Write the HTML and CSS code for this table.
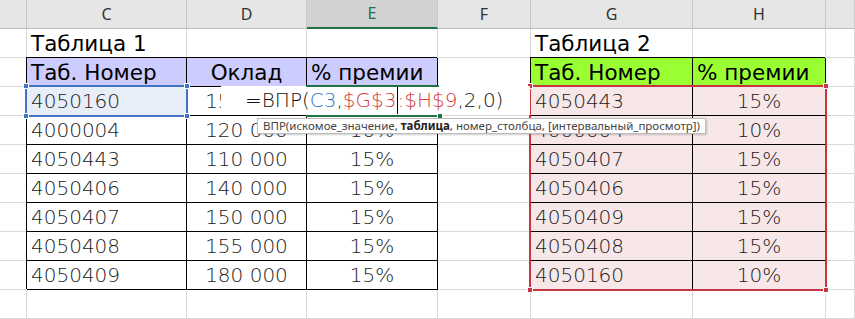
FILE: index.html
```html
<!DOCTYPE html>
<html lang="ru">
<head>
  <meta charset="UTF-8" />
  <title>ВПР — Таблица 1 и Таблица 2</title>
  <link rel="stylesheet" href="styles.css">
</head>
<body>
  <div class="sheet">
    <!-- column letters -->
    <div class="hd"></div>
    <div class="hd">C</div>
    <div class="hd">D</div>
    <div class="hd on">E</div>
    <div class="hd">F</div>
    <div class="hd">G</div>
    <div class="hd">H</div>
    <div class="hd"></div>

    <!-- row 1 -->
    <div class="c"></div>
    <div class="c cap">Таблица 1</div>
    <div class="c"></div>
    <div class="c"></div>
    <div class="c"></div>
    <div class="c cap">Таблица 2</div>
    <div class="c"></div>
    <div class="c"></div>

    <!-- row 2: table heads -->
    <div class="c"></div>
    <div class="c t h1 cap">Таб. Номер</div>
    <div class="c t h1 cap mid">Оклад</div>
    <div class="c t h1 cap">% премии</div>
    <div class="c"></div>
    <div class="c t h2 cap">Таб. Номер</div>
    <div class="c t h2 cap">% премии</div>
    <div class="c"></div>

    <!-- row 3 -->
    <div class="c"></div>
    <div class="c t n cur">4050160</div>
    <div class="c t n mid">150 000</div>
    <div class="c t n mid"></div>
    <div class="c"></div>
    <div class="c t n pk">4050443</div>
    <div class="c t n pk mid">15%</div>
    <div class="c"></div>

    <!-- row 4 -->
    <div class="c"></div>
    <div class="c t n">4000004</div>
    <div class="c t n mid">120 000</div>
    <div class="c t n mid">10%</div>
    <div class="c"></div>
    <div class="c t n pk">4000004</div>
    <div class="c t n pk mid">10%</div>
    <div class="c"></div>

    <!-- row 5 -->
    <div class="c"></div>
    <div class="c t n">4050443</div>
    <div class="c t n mid">110 000</div>
    <div class="c t n mid">15%</div>
    <div class="c"></div>
    <div class="c t n pk">4050407</div>
    <div class="c t n pk mid">15%</div>
    <div class="c"></div>

    <!-- row 6 -->
    <div class="c"></div>
    <div class="c t n">4050406</div>
    <div class="c t n mid">140 000</div>
    <div class="c t n mid">15%</div>
    <div class="c"></div>
    <div class="c t n pk">4050406</div>
    <div class="c t n pk mid">15%</div>
    <div class="c"></div>

    <!-- row 7 -->
    <div class="c"></div>
    <div class="c t n">4050407</div>
    <div class="c t n mid">150 000</div>
    <div class="c t n mid">15%</div>
    <div class="c"></div>
    <div class="c t n pk">4050409</div>
    <div class="c t n pk mid">15%</div>
    <div class="c"></div>

    <!-- row 8 -->
    <div class="c"></div>
    <div class="c t n">4050408</div>
    <div class="c t n mid">155 000</div>
    <div class="c t n mid">15%</div>
    <div class="c"></div>
    <div class="c t n pk">4050408</div>
    <div class="c t n pk mid">15%</div>
    <div class="c"></div>

    <!-- row 9 -->
    <div class="c"></div>
    <div class="c t n">4050409</div>
    <div class="c t n mid">180 000</div>
    <div class="c t n mid">15%</div>
    <div class="c"></div>
    <div class="c t n pk">4050160</div>
    <div class="c t n pk mid">10%</div>
    <div class="c"></div>

    <!-- row 10 -->
    <div class="c"></div>
    <div class="c"></div>
    <div class="c"></div>
    <div class="c"></div>
    <div class="c"></div>
    <div class="c"></div>
    <div class="c"></div>
    <div class="c"></div>

    <!-- selections, in-cell editor and hint -->
    <div class="sel sel-blue">
      <i class="hdl tl"></i><i class="hdl tr"></i><i class="hdl bl"></i><i class="hdl br"></i>
    </div>
    <div class="sel sel-red">
      <i class="hdl tl"></i><i class="hdl tr"></i><i class="hdl bl"></i><i class="hdl br"></i>
    </div>
    <div class="edit">=ВПР(<span class="ref-a">C3</span>,<span class="ref-b">$G$3<b class="caret"></b>:$H$9</span>,2,0)</div>
    <div class="sel-green"><i class="hdl br"></i></div>
    <div class="hint">ВПР(искомое_значение, <b>таблица</b>, номер_столбца, [интервальный_просмотр])</div>
  </div>
</body>
</html>
```

FILE: styles.css
```css
body {
  margin: 0;
  background: #fff;
  font-family: "Noto Sans", sans-serif;
}

.sheet {
  position: relative;
  display: grid;
  grid-template-columns: 27px 160px 120px 131px 93px 162px 133px 29px;
  grid-template-rows: repeat(11, 29px);
  width: 855px;
  height: 319px;
  overflow: hidden;
}

/* column letters */
.hd {
  background: #e6e6e6;
  border-right: 1px solid #c9c9c9;
  border-bottom: 1px solid #bdbdbd;
  color: #333;
  font-size: 16px;
  line-height: 28px;
  text-align: center;
}
.hd.on {
  background: #d2d2d2;
  color: #217346;
  border-bottom: 2px solid #217346;
  line-height: 27px;
}

/* plain cells */
.c {
  border-right: 1px solid #d9d9d9;
  border-bottom: 1px solid #d9d9d9;
  padding: 0 4px;
  font-size: 20px;
  line-height: 29px;
  white-space: nowrap;
  overflow: hidden;
  color: #000;
}
.cap {
  font-family: "DejaVu Sans", sans-serif;
  font-size: 21.5px;
}
.n {
  font-family: "DejaVu Sans", sans-serif;
  font-weight: 200;
  color: #1a1a1a;
}
.mid {
  text-align: center;
}

/* bordered table cells */
.t {
  border-right-color: #000;
  border-bottom-color: #000;
  box-shadow: -1px -1px 0 #000;
}
.h1 {
  background: #ccccff;
}
.h2 {
  background: #99ff33;
}
.pk {
  background: #f7e7e8;
}
.cur {
  background: #e8eef8;
}

/* selection frames */
.sel {
  position: absolute;
  inset: -2px -1px -1px -2px;
  border: 2px solid;
  pointer-events: none;
}
.sel-blue {
  grid-column: 2 / 3;
  grid-row: 4 / 5;
  border-color: #4472c4;
  color: #4472c4;
}
.sel-red {
  grid-column: 6 / 8;
  grid-row: 4 / 11;
  border-color: #c4373f;
  color: #c4373f;
}
.hdl {
  position: absolute;
  width: 6px;
  height: 6px;
  background: currentColor;
  border: 1px solid #fff;
  box-sizing: border-box;
}
.hdl.tl { left: -4px; top: -4px; }
.hdl.tr { right: -4px; top: -4px; }
.hdl.bl { left: -4px; bottom: -4px; }
.hdl.br { right: -4px; bottom: -4px; }

/* active cell E3 */
.sel-green {
  position: absolute;
  grid-column: 4 / 5;
  grid-row: 4 / 5;
  inset: -2px -1px -1px -1px;
  border-top: 2px solid #217346;
  border-bottom: 2px solid #217346;
  color: #217346;
}

/* in-cell formula editor */
.edit {
  position: absolute;
  grid-column: 3 / 6;
  grid-row: 4 / 5;
  inset: -1px 1px 1px 34px;
  background: #fff;
  padding-left: 24px;
  font-family: "DejaVu Sans", sans-serif;
  font-weight: 200;
  font-size: 20px;
  line-height: 29px;
  color: #111;
  white-space: nowrap;
}
.ref-a {
  color: #3a73c9;
}
.ref-b {
  color: #d0403c;
}
.caret {
  display: inline-block;
  width: 1px;
  height: 27px;
  background: #000;
  vertical-align: -7px;
}

/* function hint */
.hint {
  position: absolute;
  grid-column: 3 / 8;
  grid-row: 5 / 6;
  left: 70px;
  top: 2px;
  height: 14px;
  padding: 0 5px;
  background: #fff;
  border: 1px solid #bcbcbc;
  box-shadow: 1px 1px 2px rgba(0, 0, 0, 0.2);
  font-size: 11.5px;
  line-height: 14px;
  color: #444;
  white-space: nowrap;
}
.hint b {
  color: #222;
}
```
